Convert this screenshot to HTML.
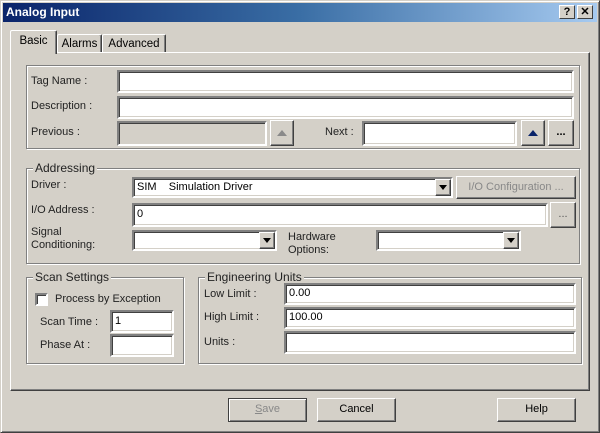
<!DOCTYPE html>
<html><head><meta charset="utf-8"><style>
*{box-sizing:border-box;margin:0;padding:0}
body{width:600px;height:433px;background:#d4d0c8;font-family:"Liberation Sans",sans-serif;font-size:11px;color:#000;position:relative;overflow:hidden}
.a{position:absolute}
.win{left:0;top:0;width:600px;height:433px;border:1px solid #d4d0c8;border-right-color:#404040;border-bottom-color:#404040;box-shadow:inset 1px 1px 0 #fff,inset -1px -1px 0 #808080}
.title{left:3px;top:3px;width:594px;height:19px;background:linear-gradient(90deg,#0a246a,#3a6ea5 50%,#a6caf0);color:#fff;font-weight:bold;font-size:12px;line-height:18px;padding-left:3px}
.tb{top:5px;width:16px;height:14px;background:#d4d0c8;border:1px solid;border-color:#fff #404040 #404040 #fff;font-weight:bold;font-size:11px;line-height:12px;text-align:center;color:#000}
.panel{left:10px;top:52px;width:580px;height:339px;border:1px solid;border-color:#fff #404040 #404040 #fff;box-shadow:inset -1px -1px 0 #808080}
.tab{border:1px solid;border-bottom:none;border-color:#fff #404040 #404040 #fff;box-shadow:inset -1px 0 0 #808080;text-align:center;background:#d4d0c8;border-radius:2px 2px 0 0;font-size:11.5px}
.grp{border:1px solid #808080;box-shadow:1px 1px 0 #fff,inset 1px 1px 0 #fff}
.gl{background:#d4d0c8;padding:0 2px;color:#222;font-size:12px;line-height:12px}
.in{background:#fff;border:2px solid;border-color:#808080 #fff #fff #808080;box-shadow:inset 1px 1px 0 #404040,inset -1px -1px 0 #d4d0c8;font-size:11px;line-height:18px;padding-left:3px}
.dis{background:#d4d0c8}
.btn{border:1px solid;border-color:#fff #404040 #404040 #fff;box-shadow:inset -1px -1px 0 #808080;text-align:center;font-size:11px;background:#d4d0c8}
.lb{color:#222;font-size:11px}
.arr{width:0;height:0;border-left:4px solid transparent;border-right:4px solid transparent;border-top:5px solid #000;position:absolute;left:5px;top:7px}
</style></head><body>
<div class="a win"></div>
<div class="a title">Analog Input</div>
<div class="a tb" style="left:559px">?</div>
<div class="a tb" style="left:577px">✕</div>

<div class="a panel"></div>
<div class="a tab" style="left:57px;top:34px;width:45px;height:18px;line-height:18px">Alarms</div>
<div class="a tab" style="left:102px;top:34px;width:64px;height:18px;line-height:18px">Advanced</div>
<div class="a tab" style="left:10px;top:30px;width:47px;height:24px;line-height:20px;border-bottom:none">Basic</div>

<div class="a grp" style="left:26px;top:65px;width:554px;height:84px"></div>
<div class="a lb" style="left:31px;top:75px">Tag Name :</div>
<div class="a in" style="left:117px;top:70px;width:457px;height:23px"></div>
<div class="a lb" style="left:31px;top:100px">Description :</div>
<div class="a in" style="left:117px;top:96px;width:457px;height:23px"></div>
<div class="a lb" style="left:31px;top:126px">Previous :</div>
<div class="a in dis" style="left:117px;top:121px;width:150px;height:25px"></div>
<div class="a btn" style="left:270px;top:120px;width:24px;height:26px"><div style="position:absolute;left:6px;top:9px;border-left:5px solid transparent;border-right:5px solid transparent;border-bottom:6px solid #8a8a8a"></div></div>
<div class="a lb" style="left:325px;top:126px">Next :</div>
<div class="a in" style="left:362px;top:121px;width:155px;height:25px"></div>
<div class="a btn" style="left:521px;top:120px;width:24px;height:26px"><div style="position:absolute;left:6px;top:9px;border-left:5px solid transparent;border-right:5px solid transparent;border-bottom:6px solid #0a246a"></div></div>
<div class="a btn" style="left:548px;top:120px;width:26px;height:26px;line-height:22px;font-weight:bold">...</div>

<div class="a grp" style="left:26px;top:168px;width:554px;height:96px"></div>
<div class="a gl" style="left:33px;top:162px">Addressing</div>
<div class="a lb" style="left:31px;top:179px">Driver :</div>
<div class="a in" style="left:132px;top:177px;width:321px;height:21px;line-height:16px">SIM&nbsp;&nbsp;&nbsp;&nbsp;Simulation Driver</div>
<div class="a btn" style="left:435px;top:179px;width:16px;height:17px"><div class="arr" style="left:3px;top:5px"></div></div>
<div class="a btn" style="left:456px;top:176px;width:120px;height:23px;line-height:20px;color:#888">I/O Configuration ...</div>
<div class="a lb" style="left:31px;top:204px">I/O Address :</div>
<div class="a in" style="left:132px;top:203px;width:416px;height:24px">0</div>
<div class="a btn" style="left:550px;top:202px;width:26px;height:26px;line-height:22px;color:#555">...</div>
<div class="a lb" style="left:31px;top:226px;line-height:13px">Signal<br>Conditioning:</div>
<div class="a in" style="left:132px;top:230px;width:145px;height:21px"></div>
<div class="a btn" style="left:259px;top:232px;width:16px;height:17px"><div class="arr" style="left:3px;top:5px"></div></div>
<div class="a lb" style="left:288px;top:231px;line-height:13px">Hardware<br>Options:</div>
<div class="a in" style="left:376px;top:230px;width:145px;height:21px"></div>
<div class="a btn" style="left:503px;top:232px;width:16px;height:17px"><div class="arr" style="left:3px;top:5px"></div></div>

<div class="a grp" style="left:26px;top:277px;width:158px;height:87px"></div>
<div class="a gl" style="left:33px;top:271px">Scan Settings</div>
<div class="a" style="left:35px;top:293px;width:13px;height:13px;background:#fff;border:2px solid;border-color:#808080 #fff #fff #808080;box-shadow:inset 1px 1px 0 #404040"></div>
<div class="a lb" style="left:55px;top:293px">Process by Exception</div>
<div class="a lb" style="left:40px;top:316px">Scan Time :</div>
<div class="a in" style="left:110px;top:310px;width:64px;height:23px">1</div>
<div class="a lb" style="left:40px;top:339px">Phase At :</div>
<div class="a in" style="left:110px;top:334px;width:64px;height:23px"></div>

<div class="a grp" style="left:198px;top:277px;width:384px;height:87px"></div>
<div class="a gl" style="left:205px;top:271px">Engineering Units</div>
<div class="a lb" style="left:204px;top:288px">Low Limit :</div>
<div class="a in" style="left:284px;top:283px;width:292px;height:22px;line-height:17px">0.00</div>
<div class="a lb" style="left:204px;top:311px">High Limit :</div>
<div class="a in" style="left:284px;top:307px;width:292px;height:22px;line-height:17px">100.00</div>
<div class="a lb" style="left:204px;top:336px">Units :</div>
<div class="a in" style="left:284px;top:331px;width:292px;height:23px"></div>

<div class="a btn" style="left:228px;top:398px;width:79px;height:24px;line-height:21px;color:#888;border-color:#404040;box-shadow:inset 1px 1px 0 #fff,inset -1px -1px 0 #808080"><u>S</u>ave</div>
<div class="a btn" style="left:317px;top:398px;width:79px;height:24px;line-height:21px">Cancel</div>
<div class="a btn" style="left:497px;top:398px;width:79px;height:24px;line-height:21px">Help</div>
</body></html>
